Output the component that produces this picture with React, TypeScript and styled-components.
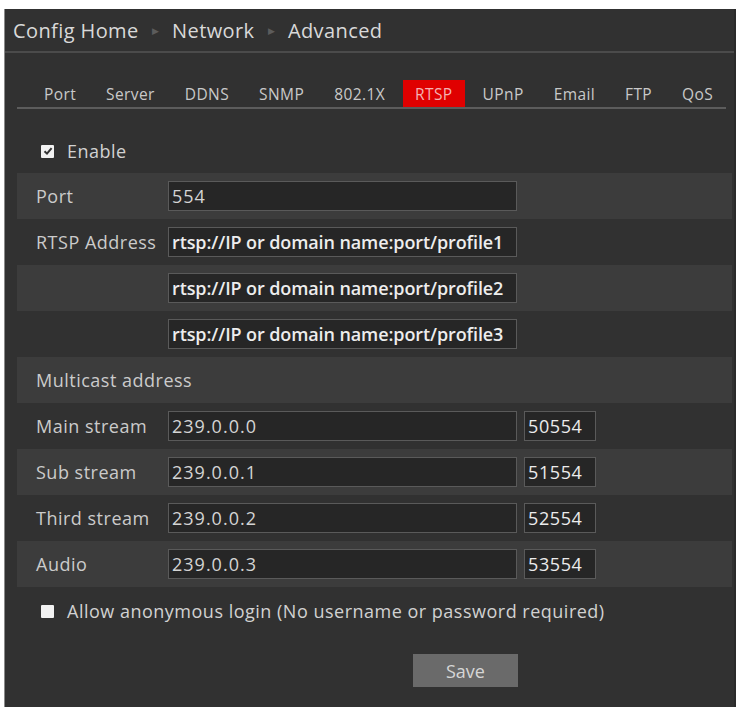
import React from "react";
import styled, { createGlobalStyle } from "styled-components";

const Global = createGlobalStyle`
  html, body { margin: 0; padding: 0; background: #ffffff; }
  body { font-family: "Open Sans", "Noto Sans", sans-serif; }
  * { box-sizing: border-box; }
`;

const Panel = styled.div`
  margin: 9px 0 0 4px;
  width: 732px;
  height: 698px;
  background: #313131;
  border-left: 1px solid #8a8a8a;
  border-right: 2px solid #2a2a2a;
  display: flex;
  flex-direction: column;
`;

const Header = styled.div`
  height: 44px;
  display: flex;
  align-items: center;
  padding-left: 8px;
  gap: 13px;
  font-size: 20px;
  letter-spacing: 0.4px;
  color: #d9d9d9;
  border-bottom: 2px solid #4b4b4b;
`;

const Crumb = styled.span``;

const Arrow = styled.span`
  color: #5c5c5c;
  font-size: 9px;
`;

const Tabs = styled.div`
  margin: 0 8px 0 12px;
  height: 56px;
  display: flex;
  align-items: flex-end;
  padding-left: 15px;
  gap: 6px;
  border-bottom: 2px solid #5c5c5c;
`;

const Tab = styled.div<{ $active?: boolean }>`
  height: 27px;
  padding: 0 12px;
  display: flex;
  align-items: center;
  font-size: 15.5px;
  letter-spacing: 0.4px;
  color: ${(p) => (p.$active ? "#f4b3b3" : "#c9c9c9")};
  background: ${(p) => (p.$active ? "#e00000" : "transparent")};
`;

const Content = styled.div`
  padding: 0 2px 0 12px;
  display: flex;
  flex-direction: column;
`;

const CheckRow = styled.label`
  height: 64px;
  padding: 20px 0 0 24px;
  display: flex;
  align-items: center;
  gap: 13px;
  font-size: 18px;
  letter-spacing: 0.5px;
  color: #d2d2d2;
`;

const Box = styled.span<{ $checked?: boolean }>`
  width: 13px;
  height: 13px;
  background: #f2f2f2;
  border-radius: 1px;
  display: flex;
  align-items: center;
  justify-content: center;
`;

const Row = styled.div<{ $alt?: boolean }>`
  height: 46px;
  display: grid;
  grid-template-columns: 125px 349px 72px;
  column-gap: 7px;
  align-items: center;
  padding-left: 19px;
  background: ${(p) => (p.$alt ? "#3c3c3c" : "transparent")};
`;

const Label = styled.span<{ $wide?: boolean }>`
  font-size: 18px;
  letter-spacing: 0.5px;
  color: #cbcbcb;
  white-space: nowrap;
  grid-column: ${(p) => (p.$wide ? "1 / 4" : "auto")};
`;

const Input = styled.div<{ $bright?: boolean }>`
  height: 30px;
  background: #262626;
  border: 1px solid #5a5a5a;
  display: flex;
  align-items: center;
  padding-left: 3px;
  font-size: 18px;
  white-space: nowrap;
  overflow: hidden;
  color: ${(p) => (p.$bright ? "#ededed" : "#d4d4d4")};
  font-weight: ${(p) => (p.$bright ? 600 : 400)};
  letter-spacing: ${(p) => (p.$bright ? "-0.1px" : "1px")};
`;

const PortInput = styled(Input)`
  font-weight: 500;
  letter-spacing: 0.6px;
  color: #ececec;
`;

const AnonRow = styled(CheckRow)`
  height: 48px;
  padding-top: 0;
`;

const Footer = styled.div`
  padding: 19px 0 0 408px;
`;

const SaveButton = styled.button`
  width: 105px;
  height: 33px;
  border: none;
  background: #6a6a6a;
  color: #d6d6d6;
  font-family: inherit;
  font-size: 18px;
`;

const tabs = ["Port", "Server", "DDNS", "SNMP", "802.1X", "RTSP", "UPnP", "Email", "FTP", "QoS"];

const streams = [
  { label: "Main stream", ip: "239.0.0.0", port: "50554" },
  { label: "Sub stream", ip: "239.0.0.1", port: "51554" },
  { label: "Third stream", ip: "239.0.0.2", port: "52554" },
  { label: "Audio", ip: "239.0.0.3", port: "53554" },
];

export default function App() {
  return (
    <>
      <Global />
      <Panel>
        <Header>
          <Crumb>Config Home</Crumb>
          <Arrow>▶</Arrow>
          <Crumb>Network</Crumb>
          <Arrow>▶</Arrow>
          <Crumb>Advanced</Crumb>
        </Header>
        <Tabs>
          {tabs.map((t) => (
            <Tab key={t} $active={t === "RTSP"}>
              {t}
            </Tab>
          ))}
        </Tabs>
        <Content>
          <CheckRow>
            <Box $checked>
              <svg width="10" height="10" viewBox="0 0 10 10">
                <path d="M1.5 5.2 L4 7.6 L8.6 2.2" stroke="#333" strokeWidth="2" fill="none" />
              </svg>
            </Box>
            Enable
          </CheckRow>
          <Row $alt>
            <Label>Port</Label>
            <Input>554</Input>
          </Row>
          <Row>
            <Label>RTSP Address</Label>
            <Input $bright>rtsp://IP or domain name:port/profile1</Input>
          </Row>
          <Row $alt>
            <Label />
            <Input $bright>rtsp://IP or domain name:port/profile2</Input>
          </Row>
          <Row>
            <Label />
            <Input $bright>rtsp://IP or domain name:port/profile3</Input>
          </Row>
          <Row $alt>
            <Label $wide>Multicast address</Label>
          </Row>
          {streams.map((s, i) => (
            <Row key={s.label} $alt={i % 2 === 1}>
              <Label>{s.label}</Label>
              <Input>{s.ip}</Input>
              <PortInput>{s.port}</PortInput>
            </Row>
          ))}
          <AnonRow>
            <Box />
            Allow anonymous login (No username or password required)
          </AnonRow>
        </Content>
        <Footer>
          <SaveButton>Save</SaveButton>
        </Footer>
      </Panel>
    </>
  );
}
